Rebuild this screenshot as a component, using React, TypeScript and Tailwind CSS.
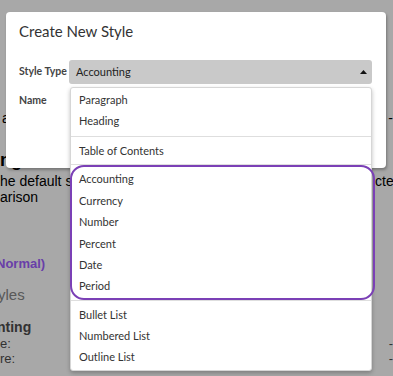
import React from "react";

const lato = "font-['Lato','Noto_Sans',sans-serif]";

function Item({ label, h = "h-[21px]", pl = "pl-[8px]" }: { label: string; h?: string; pl?: string }) {
  return (
    <div className={`flex items-center text-[11px] text-[#333] ${h} ${pl}`}>
      {label}
    </div>
  );
}

function StyleTypeMenu() {
  return (
    <div
      className={`absolute left-[70px] top-[87px] w-[302px] rounded-[3px] border border-[#d6d6d6] bg-white pt-[2px] pb-[3px] shadow-[0_2px_4px_rgba(0,0,0,0.25)] ${lato}`}
    >
      <Item label="Paragraph" />
      <Item label="Heading" />
      <div className="mt-[4px] h-px bg-[#dedede]" />
      <div className="pt-[4px]">
        <Item label="Table of Contents" />
      </div>
      <div className="mt-[2px] h-px bg-[#dedede]" />
      {/* highlighted number formats */}
      <div className="-ml-[1px] -mr-[4px] rounded-[14px] border-2 border-[#7b40b6] pt-[2px] pb-[1px]">
        <Item label="Accounting" h="h-[21.4px]" pl="pl-[7px]" />
        <Item label="Currency" h="h-[21.4px]" pl="pl-[7px]" />
        <Item label="Number" h="h-[21.4px]" pl="pl-[7px]" />
        <Item label="Percent" h="h-[21.4px]" pl="pl-[7px]" />
        <Item label="Date" h="h-[21.4px]" pl="pl-[7px]" />
        <Item label="Period" h="h-[21.4px]" pl="pl-[7px]" />
      </div>
      <div className="h-px bg-[#dedede]" />
      <div className="pt-[3px]">
        <Item label="Bullet List" />
        <Item label="Numbered List" />
        <Item label="Outline List" />
      </div>
    </div>
  );
}

function CreateStyleModal() {
  return (
    <div
      className={`absolute left-[6px] top-[12px] h-[156px] w-[380px] rounded-[4px] bg-white pl-[13px] pr-[14px] pt-[9px] shadow-[1px_2px_3px_rgba(0,0,0,0.3)] ${lato}`}
    >
      <h2 className="text-[15px] leading-[20px] text-[#333]">Create New Style</h2>
      <div className="mt-[19px] flex items-center">
        <span className="w-[50px] text-[10.5px] font-bold text-[#444]">Style Type</span>
        <div className="flex h-[24px] flex-1 items-center justify-between rounded-[3px] bg-[#c9c9c9] pl-[7px] pr-[4px]">
          <span className="text-[11px] text-[#222]">Accounting</span>
          <svg width="7" height="4" viewBox="0 0 7 4" className="mr-[1px]">
            <path d="M0 4 L3.5 0 L7 4 Z" fill="#111" />
          </svg>
        </div>
      </div>
      <div className="mt-[9px] text-[10.5px] font-bold text-[#444]">Name</div>
    </div>
  );
}

export default function App() {
  return (
    <div className="relative h-[376px] w-[393px] overflow-hidden bg-white">
      {/* page behind the dialog */}
      <div className="pt-[110px] font-['Liberation_Sans',Arial,sans-serif] text-black">
        <div className="flex h-[16px] justify-between pl-[2px] text-[14px] leading-[16px]">
          <span>a</span>
          <span>-</span>
        </div>
        <div className="mt-[24px] text-[18px] font-bold leading-[20px]">ng</div>
        <div className="mt-[3px] flex justify-between text-[14px] leading-[16px]">
          <span>he default style for the</span>
          <span className="w-[18px] overflow-hidden">cted</span>
        </div>
        <div className="text-[14px] leading-[16px]">arison</div>
        <div className="mt-[51px] -ml-[4px] text-[13px] font-bold leading-[16px] text-[#a060ff]">
          Normal)
        </div>
        <div className="mt-[14px] -ml-[2px] text-[15px] leading-[18px] text-[#878787]">yles</div>
        <div className="mt-[14px] -ml-[3px] text-[14px] font-bold leading-[18px] text-[#4d4d4d]">
          nting
        </div>
        <div className="mt-[1px] flex justify-between text-[13px] leading-[14px] text-[#4d4d4d]">
          <span>e:</span>
          <span>-</span>
        </div>
        <div className="mt-[1px] flex justify-between text-[13px] leading-[14px] text-[#4d4d4d]">
          <span>re:</span>
          <span>-</span>
        </div>
      </div>
      <div className="absolute inset-0 bg-black/[0.34]" />
      <CreateStyleModal />
      <StyleTypeMenu />
    </div>
  );
}
